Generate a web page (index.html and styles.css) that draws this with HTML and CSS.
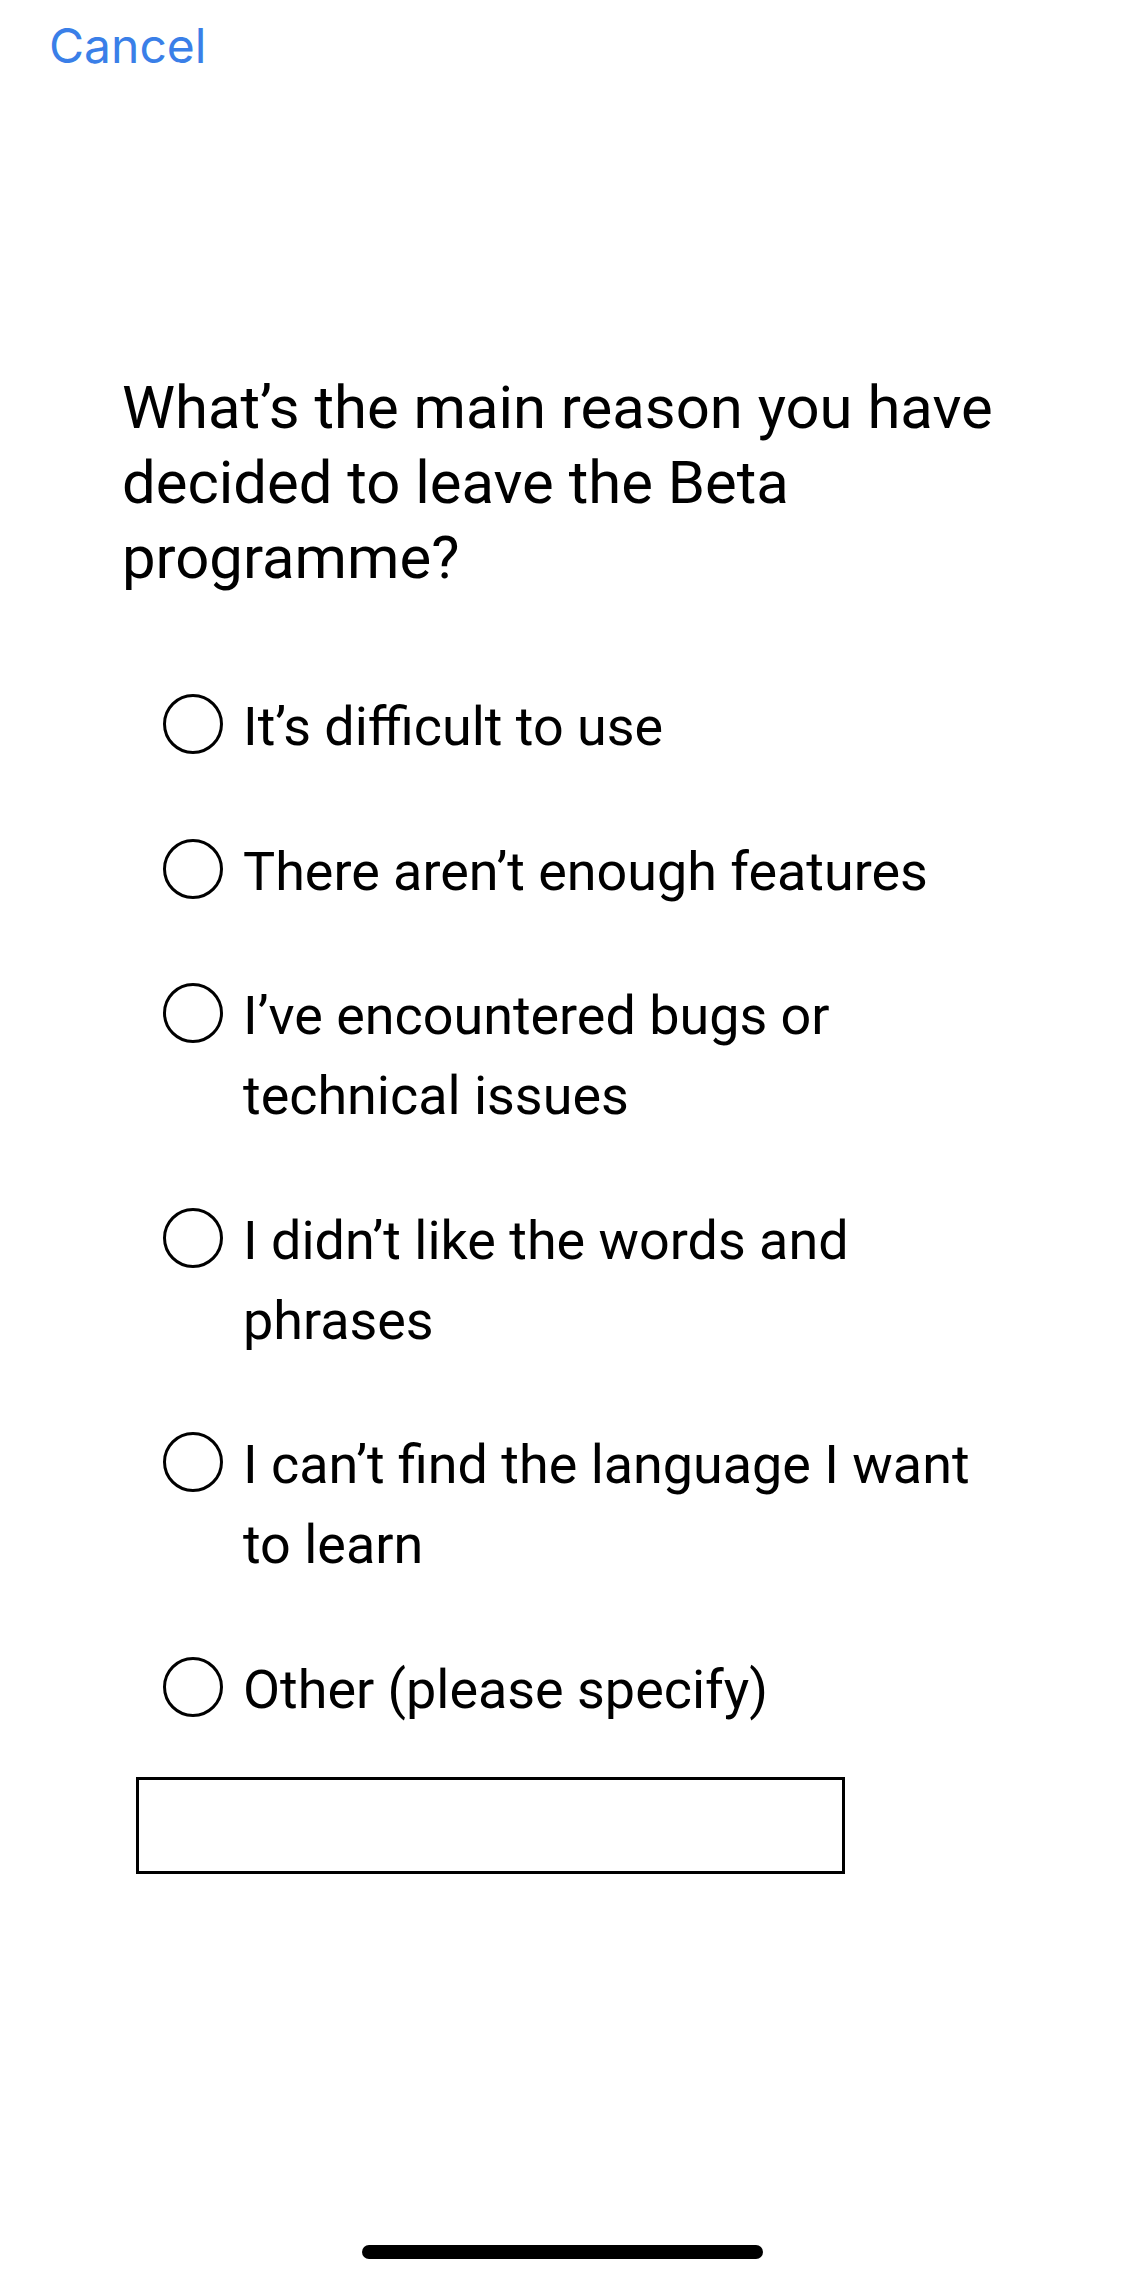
FILE: index.html
```html
<!DOCTYPE html>
<html lang="en">
<head>
<meta charset="utf-8">
<title>Leave Beta</title>
<link rel="stylesheet" href="styles.css">
</head>
<body>
<div class="screen">
  <header class="topbar">
    <span class="cancel">Cancel</span>
  </header>
  <h1 class="question">What’s the main reason you have decided to leave the Beta programme?</h1>
  <ul class="options">
    <li class="option"><span class="radio"></span><span class="label">It’s difficult to use</span></li>
    <li class="option"><span class="radio"></span><span class="label">There aren’t enough features</span></li>
    <li class="option"><span class="radio"></span><span class="label">I’ve encountered bugs or technical issues</span></li>
    <li class="option"><span class="radio"></span><span class="label">I didn’t like the words and phrases</span></li>
    <li class="option"><span class="radio"></span><span class="label">I can’t find the language I want to learn</span></li>
    <li class="option"><span class="radio"></span><span class="label">Other (please specify)</span></li>
  </ul>
  <div class="other-input"></div>
  <div class="home-indicator"></div>
</div>
</body>
</html>
```
FILE: styles.css
```css
* { box-sizing: border-box; }
html, body { margin: 0; padding: 0; background: #fff; }
body { font-family: Roboto, "Liberation Sans", sans-serif; color: #000; }

.screen {
  min-height: 2284px;
  display: flex;
  flex-direction: column;
}

.topbar {
  padding: 16px 0 0 49px;
}
.cancel {
  font-family: Inter, Roboto, sans-serif;
  font-size: 48px;
  line-height: 60px;
  color: #3a7fe8;
  display: block;
}

.question {
  margin: 295px 0 0;
  padding: 0 100px 0 122px;
  font-size: 59.8px;
  line-height: 75px;
  font-weight: 400;
}

.options {
  list-style: none;
  margin: 91px 0 0;
  padding: 0 125px 0 163px;
  display: flex;
  flex-direction: column;
  gap: 64.5px;
}
.option {
  display: flex;
  align-items: flex-start;
  gap: 20px;
}
.radio {
  flex: none;
  width: 60px;
  height: 60px;
  margin-top: 7px;
  border: 3px solid #000;
  border-radius: 50%;
}
.label {
  font-size: 53.9px;
  line-height: 80px;
}

.other-input {
  margin: 47.5px 0 0 136px;
  width: 709px;
  height: 97px;
  border: 3px solid #000;
}

.home-indicator {
  margin: auto auto 25px;
  width: 401px;
  height: 14px;
  border-radius: 7px;
  background: #000;
}
```
